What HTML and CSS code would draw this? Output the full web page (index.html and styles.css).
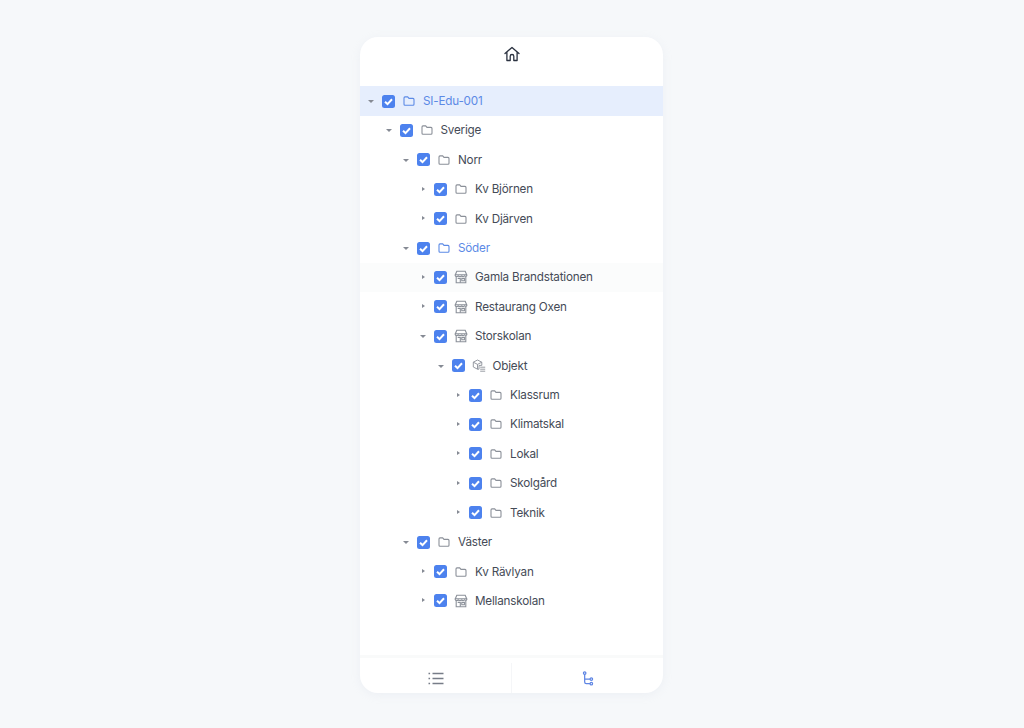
FILE: index.html
```html
<!DOCTYPE html>
<html lang="en">
<head>
    <meta charset="UTF-8">
    <meta name="viewport" content="width=device-width, initial-scale=1.0">
    <title>Tree</title>
    <link rel="stylesheet" href="styles.css">
</head>
<body>

<svg class="defs" width="0" height="0">
    <symbol id="check" viewBox="0 0 13 13">
        <path d="M3 6.800 5.500 9.100 10 4.200" fill="none" stroke="#fff" stroke-width="2"/>
    </symbol>
    <symbol id="folder" viewBox="0 0 14 14">
        <path d="M2 3.900c0-.6.4-1 1-1h2.700l1.300 1.500h4c.6 0 1 .4 1 1v4.800c0 .6-.4 1-1 1H3c-.6 0-1-.4-1-1z" fill="none" stroke="currentColor" stroke-width="1.100"/>
    </symbol>
    <symbol id="shop" viewBox="0 0 14 14">
        <g fill="none" stroke="currentColor" stroke-width="1.100">
            <path d="M2.800 1.200h8.400l1.500 3.600H1.300z"/>
            <path d="M1.300 4.800v1c0 .9 2.200.9 2.900 0 .7.9 2.900.9 3.600 0 .7.9 2.300.9 2.900 0 .4.700 1.700.700 2 0v-1"/>
            <path d="M2.200 6.800v6h9.600v-6"/>
            <path d="M3.700 8.400h2.600v4.400M7.800 8.400h2.600v2.400H7.800z"/>
        </g>
    </symbol>
    <symbol id="object" viewBox="0 0 14 14">
        <g fill="none" stroke="currentColor" stroke-width=".9">
            <path d="M5.500 1 9.800 3.200v3.200H7v3.800H5.500L1.300 8V3.200z"/>
            <path d="M1.300 3.200 5.500 5.400 9.800 3.200M5.500 5.400v4.800"/>
            <path d="M8.200 8.200h5M8.200 10.200h5M8.200 12.200h5"/>
        </g>
    </symbol>
</svg>

<div class="panel">
    <div class="top-bar">
        <svg class="home" viewBox="0 0 16 16">
            <path d="M1 7.600 8 1.400l7 6.200M2.900 6.200v8.300h3.300v-4.200c0-1 .8-1.800 1.800-1.800s1.800.8 1.800 1.800v4.200h3.300V6.200" fill="none" stroke="#2b3240" stroke-width="1.300" stroke-linejoin="round" stroke-linecap="round"/>
        </svg>
    </div>

    <div class="tree">
        <div class="row selected lvl-0"><span class="arrow open"></span><span class="box"><svg><use href="#check"/></svg></span><svg class="icon"><use href="#folder"/></svg><span class="label">SI-Edu-001</span></div>
        <div class="row lvl-1"><span class="arrow open"></span><span class="box"><svg><use href="#check"/></svg></span><svg class="icon"><use href="#folder"/></svg><span class="label">Sverige</span></div>
        <div class="row lvl-2"><span class="arrow open"></span><span class="box"><svg><use href="#check"/></svg></span><svg class="icon"><use href="#folder"/></svg><span class="label">Norr</span></div>
        <div class="row lvl-3"><span class="arrow"></span><span class="box"><svg><use href="#check"/></svg></span><svg class="icon"><use href="#folder"/></svg><span class="label">Kv Björnen</span></div>
        <div class="row lvl-3"><span class="arrow"></span><span class="box"><svg><use href="#check"/></svg></span><svg class="icon"><use href="#folder"/></svg><span class="label">Kv Djärven</span></div>
        <div class="row active lvl-2"><span class="arrow open"></span><span class="box"><svg><use href="#check"/></svg></span><svg class="icon"><use href="#folder"/></svg><span class="label">Söder</span></div>
        <div class="row hovered lvl-3"><span class="arrow"></span><span class="box"><svg><use href="#check"/></svg></span><svg class="icon"><use href="#shop"/></svg><span class="label">Gamla Brandstationen</span></div>
        <div class="row lvl-3"><span class="arrow"></span><span class="box"><svg><use href="#check"/></svg></span><svg class="icon"><use href="#shop"/></svg><span class="label">Restaurang Oxen</span></div>
        <div class="row lvl-3"><span class="arrow open"></span><span class="box"><svg><use href="#check"/></svg></span><svg class="icon"><use href="#shop"/></svg><span class="label">Storskolan</span></div>
        <div class="row lvl-4"><span class="arrow open"></span><span class="box"><svg><use href="#check"/></svg></span><svg class="icon"><use href="#object"/></svg><span class="label">Objekt</span></div>
        <div class="row lvl-5"><span class="arrow"></span><span class="box"><svg><use href="#check"/></svg></span><svg class="icon"><use href="#folder"/></svg><span class="label">Klassrum</span></div>
        <div class="row lvl-5"><span class="arrow"></span><span class="box"><svg><use href="#check"/></svg></span><svg class="icon"><use href="#folder"/></svg><span class="label">Klimatskal</span></div>
        <div class="row lvl-5"><span class="arrow"></span><span class="box"><svg><use href="#check"/></svg></span><svg class="icon"><use href="#folder"/></svg><span class="label">Lokal</span></div>
        <div class="row lvl-5"><span class="arrow"></span><span class="box"><svg><use href="#check"/></svg></span><svg class="icon"><use href="#folder"/></svg><span class="label">Skolgård</span></div>
        <div class="row lvl-5"><span class="arrow"></span><span class="box"><svg><use href="#check"/></svg></span><svg class="icon"><use href="#folder"/></svg><span class="label">Teknik</span></div>
        <div class="row lvl-2"><span class="arrow open"></span><span class="box"><svg><use href="#check"/></svg></span><svg class="icon"><use href="#folder"/></svg><span class="label">Väster</span></div>
        <div class="row lvl-3"><span class="arrow"></span><span class="box"><svg><use href="#check"/></svg></span><svg class="icon"><use href="#folder"/></svg><span class="label">Kv Rävlyan</span></div>
        <div class="row lvl-3"><span class="arrow"></span><span class="box"><svg><use href="#check"/></svg></span><svg class="icon"><use href="#shop"/></svg><span class="label">Mellanskolan</span></div>
    </div>

    <div class="tabs">
        <div class="tab">
            <svg class="tab-icon" viewBox="0 0 16 14">
                <path d="M4.500 2h11M4.500 7h11M4.500 12h11" stroke="#777d88" stroke-width="1.500" fill="none"/>
                <path d="M.5 2h1.600M.5 7h1.600M.5 12h1.600" stroke="#777d88" stroke-width="1.700" fill="none"/>
            </svg>
        </div>
        <div class="tab">
            <svg class="tab-icon" viewBox="0 0 14 18">
                <g fill="none" stroke="#5f86e4" stroke-width="1.500">
                    <circle cx="3" cy="2.400" r="1.500"/>
                    <circle cx="11" cy="9.600" r="1.500"/>
                    <circle cx="11" cy="15.200" r="1.500"/>
                    <path d="M3 3.900v9.300c0 1.200.8 2 2 2h4.500M3 9.600h6.500"/>
                </g>
            </svg>
        </div>
    </div>
</div>

</body>
</html>
```

FILE: styles.css
```css
body {
    font-family: "Inter", Arial, sans-serif;
    background-color: #f6f8fa;
    margin: 0;
    height: 728px;
    display: flex;
    justify-content: center;
    padding-top: 37px;
    box-sizing: border-box;
    overflow: hidden;
}

.defs {
    position: absolute;
}

.panel {
    width: 303px;
    height: 656px;
    margin-right: 1px;
    background-color: white;
    border-radius: 18px;
    box-shadow: 0 2px 10px rgba(190, 200, 215, 0.16);
    display: flex;
    flex-direction: column;
    overflow: hidden;
}

.top-bar {
    height: 49.3px;
    flex-shrink: 0;
    display: flex;
    justify-content: center;
    padding-top: 9px;
    box-sizing: border-box;
}

.home {
    width: 16px;
    height: 16px;
}

.tree {
    flex: 1;
}

.row {
    height: 29.41px;
    display: flex;
    align-items: center;
    color: #454b57;
    font-size: 11.7px;
    letter-spacing: -0.2px;
}

.selected {
    background-color: #e6eefd;
    color: #5c8ae6;
}

.active {
    color: #5c8ae6;
}

.hovered {
    background-color: #fbfcfc;
}

.lvl-0 { padding-left: 7px; }
.lvl-1 { padding-left: 24.5px; }
.lvl-2 { padding-left: 42px; }
.lvl-3 { padding-left: 59px; }
.lvl-4 { padding-left: 76.5px; }
.lvl-5 { padding-left: 94px; }

.arrow {
    width: 8px;
    height: 8px;
    margin-right: 7px;
    flex-shrink: 0;
    position: relative;
}

/* little triangles */
.arrow::after {
    content: "";
    position: absolute;
    left: 3px;
    top: 1.5px;
    border-left: 3.5px solid #858a94;
    border-top: 2.5px solid transparent;
    border-bottom: 2.5px solid transparent;
}

.arrow.open::after {
    left: 1px;
    top: 3px;
    border-top: 3.5px solid #858a94;
    border-left: 3px solid transparent;
    border-right: 3px solid transparent;
    border-bottom: none;
}

.box {
    width: 13px;
    height: 13px;
    border-radius: 2.5px;
    background-color: #4d82ee;
    flex-shrink: 0;
    display: flex;
}

.box svg {
    width: 13px;
    height: 13px;
}

.icon {
    width: 14px;
    height: 14px;
    margin-left: 7px;
    margin-right: 7px;
    color: #8b9099;
    flex-shrink: 0;
}

.selected .icon,
.active .icon {
    color: #5c8ae6;
}

.label {
    white-space: nowrap;
}

.tabs {
    height: 38px;
    flex-shrink: 0;
    border-top: 3px solid #f9fafa;
    display: flex;
    padding-top: 5px;
    box-sizing: border-box;
}

.tab {
    flex: 1;
    display: flex;
    justify-content: center;
    align-items: center;
}

.tab:first-child {
    border-right: 1px solid #f5f6f8;
}

.tab-icon {
    height: 15px;
    width: 16px;
}
```
